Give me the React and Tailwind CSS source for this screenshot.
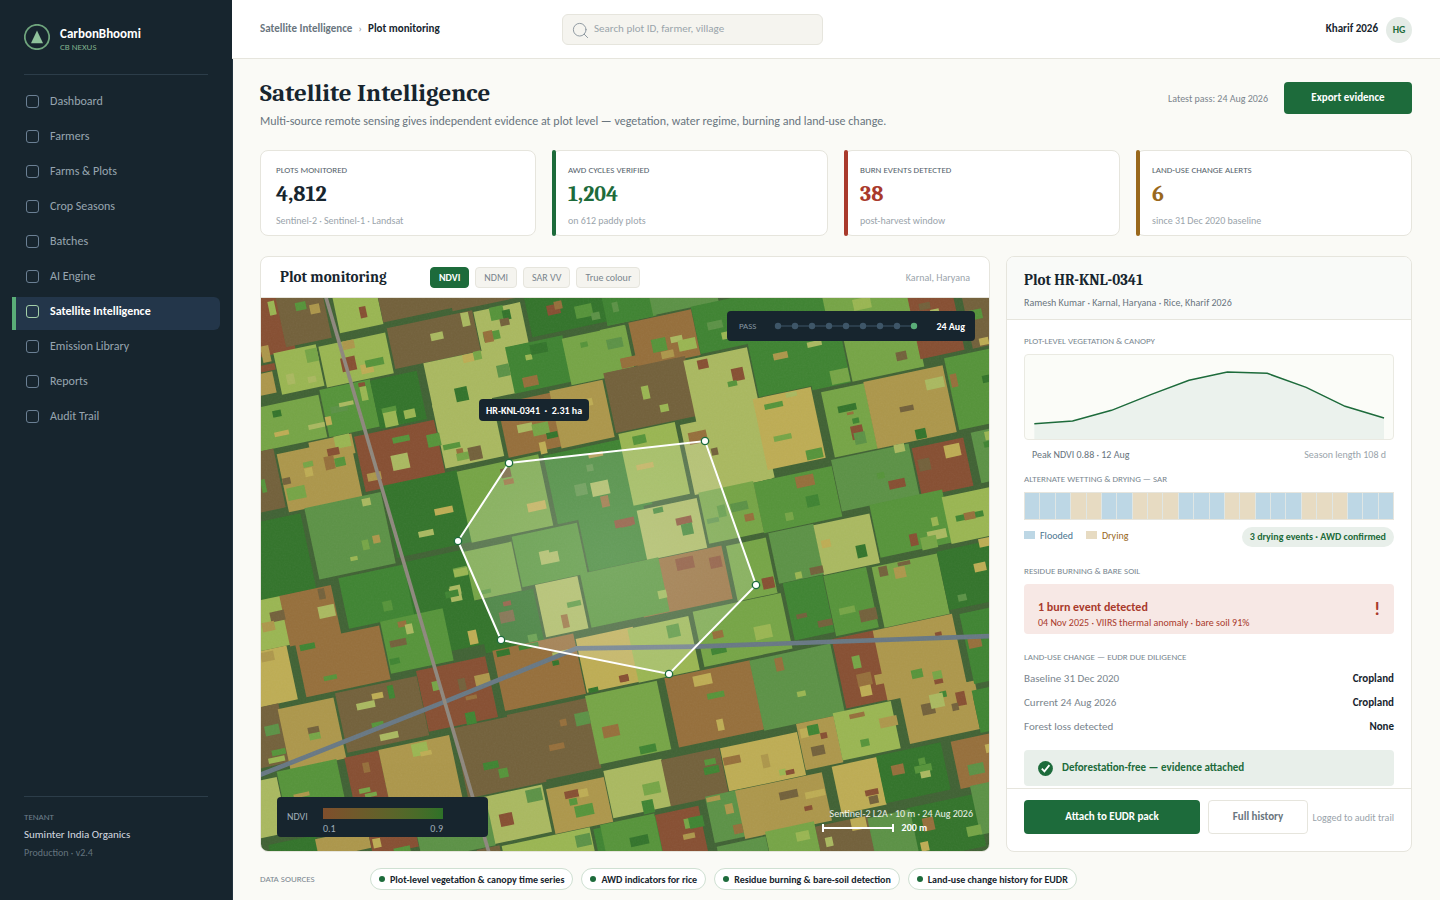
import React from 'react';
import { Search } from 'lucide-react';

const navItems = [
  'Dashboard',
  'Farmers',
  'Farms & Plots',
  'Crop Seasons',
  'Batches',
  'AI Engine',
  'Satellite Intelligence',
  'Emission Library',
  'Reports',
  'Audit Trail',
];

const stats = [
  { label: 'PLOTS MONITORED', value: '4,812', note: 'Sentinel-2 · Sentinel-1 · Landsat', text: 'text-[#17252e]', bar: '' },
  { label: 'AWD CYCLES VERIFIED', value: '1,204', note: 'on 612 paddy plots', text: 'text-[#1d6b3b]', bar: 'bg-[#1d6b3b]' },
  { label: 'BURN EVENTS DETECTED', value: '38', note: 'post-harvest window', text: 'text-[#a93a2c]', bar: 'bg-[#a93a2c]' },
  { label: 'LAND-USE CHANGE ALERTS', value: '6', note: 'since 31 Dec 2020 baseline', text: 'text-[#99681c]', bar: 'bg-[#99681c]' },
];

const layers = ['NDVI', 'NDMI', 'SAR VV', 'True colour'];

const sources = [
  'Plot-level vegetation & canopy time series',
  'AWD indicators for rice',
  'Residue burning & bare-soil detection',
  'Land-use change history for EUDR',
];

const landUse = [
  ['Baseline 31 Dec 2020', 'Cropland'],
  ['Current 24 Aug 2026', 'Cropland'],
  ['Forest loss detected', 'None'],
];

// F = flooded, D = drying
const awd = 'FFFDDFFDDDFFFDDFFFDDDFFF'.split('');

const crops = {
  A: '#33742b',
  B: '#3f8432',
  C: '#56943a',
  D: '#5c9246',
  E: '#76a546',
  F: '#9ab652',
  G: '#aab960',
  H: '#bead54',
  I: '#ad974b',
  J: '#966f3b',
  K: '#73613b',
  L: '#874f32',
};

// Each tile lists rectangles as [x, y, w, h, crop], turned by the field angle round x, y
const FIELD_ANGLE = -12;

const tiles = [
  {
    x: -3,
    y: -24,
    fields: [
      [-60, 20, 130, 190, 'L'], [41, -4, 140, 180, 'K'], [211, -7, 133, 140, 'F'], [347, -10, 235, 110, 'K'],
      [560, -20, 240, 86, 'K'], [380, 115, 262, 125, 'K'], [640, 66, 143, 125, 'G'], [490, 220, 255, 145, 'G'],
      [40, 190, 130, 127, 'F'], [175, 170, 205, 125, 'F'], [-30, 258, 68, 65, 'I'], [0, 170, 25, 50, 'I'],
      [-40, 360, 220, 130, 'E'], [178, 300, 155, 145, 'C'], [330, 272, 143, 148, 'A'], [735, 172, 176, 142, 'B'],
      [1020, 0, 150, 110, 'C'], [785, -10, 235, 155, 'A'], [905, 146, 195, 143, 'E'], [282, 440, 245, 170, 'L'],
      [516, 345, 180, 195, 'G'], [50, 493, 225, 178, 'I'], [145, 458, 132, 60, 'I'], [-50, 495, 92, 180, 'K'],
      [133, 655, 234, 218, 'D'], [-60, 708, 185, 230, 'A'], [366, 588, 230, 220, 'A'], [712, 342, 165, 165, 'J'],
      [868, 303, 163, 176, 'I'], [1042, 248, 150, 180, 'K'], [590, 545, 250, 218, 'E'], [850, 497, 290, 210, 'B'],
      [940, 620, 200, 230, 'B'], [755, 740, 200, 155, 'C'], [425, 818, 196, 290, 'A'], [612, 785, 145, 150, 'E'],
    ],
    patches: [
      [22, 36, 20, 42, 'F'], [104, 40, 32, 24, 'C'], [147, 46, 30, 28, 'I'], [296, 52, 20, 34, 'L'],
      [600, 70, 24, 42, 'G'], [510, 132, 38, 22, 'G'], [686, 54, 42, 40, 'C'], [725, 62, 24, 30, 'A'],
      [718, 88, 28, 22, 'K'], [668, 130, 50, 26, 'C'], [668, 126, 28, 34, 'J'], [858, 48, 40, 30, 'L'],
      [880, 36, 24, 24, 'J'], [942, 50, 52, 38, 'C'], [992, 70, 26, 22, 'D'], [1054, 38, 18, 30, 'D'],
      [134, 180, 36, 40, 'E'], [77, 254, 24, 32, 'G'], [142, 262, 25, 18, 'G'], [245, 155, 36, 26, 'I'],
      [240, 206, 44, 42, 'L'], [300, 226, 38, 28, 'H'], [314, 212, 56, 22, 'C'], [0, 228, 44, 20, 'L'],
      [606, 196, 34, 24, 'H'], [638, 186, 24, 26, 'E'], [708, 228, 38, 36, 'D'], [795, 196, 20, 16, 'F'],
      [808, 166, 52, 30, 'A'], [786, 264, 46, 30, 'J'], [960, 158, 22, 16, 'C'], [1038, 150, 48, 30, 'D'],
      [1080, 206, 60, 30, 'J'], [582, 296, 38, 42, 'A'], [294, 280, 20, 12, 'L'], [298, 292, 20, 42, 'F'],
      [210, 352, 52, 20, 'D'], [236, 340, 44, 12, 'G'], [194, 382, 18, 26, 'H'], [144, 406, 50, 14, 'G'],
      [42, 428, 44, 14, 'H'], [36, 364, 26, 20, 'A'], [364, 356, 44, 18, 'C'], [368, 370, 40, 44, 'F'],
      [430, 362, 34, 26, 'F'], [396, 444, 52, 18, 'C'], [498, 436, 40, 38, 'C'], [391, 498, 52, 46, 'G'],
      [320, 552, 42, 24, 'I'], [548, 466, 52, 16, 'C'], [588, 478, 20, 16, 'J'], [588, 492, 38, 22, 'E'],
      [622, 474, 40, 40, 'K'], [770, 406, 46, 24, 'G'], [814, 404, 50, 36, 'E'], [858, 430, 34, 18, 'A'],
      [836, 458, 20, 36, 'H'], [972, 328, 24, 22, 'H'], [984, 492, 44, 14, 'I'], [220, 440, 48, 38, 'F'],
      [200, 478, 36, 22, 'L'], [190, 502, 30, 40, 'J'], [222, 506, 32, 26, 'C'], [128, 518, 30, 16, 'E'],
      [132, 536, 24, 26, 'H'], [66, 566, 24, 20, 'K'], [78, 596, 56, 38, 'E'], [0, 570, 14, 40, 'C'],
      [304, 628, 26, 22, 'G'], [336, 738, 22, 24, 'I'], [304, 752, 20, 30, 'E'], [270, 802, 22, 12, 'F'],
      [522, 658, 56, 20, 'H'], [474, 726, 46, 18, 'G'], [720, 538, 30, 28, 'K'], [730, 570, 30, 16, 'J'],
      [800, 642, 56, 26, 'H'], [978, 526, 20, 20, 'D'], [942, 586, 36, 34, 'D'], [990, 580, 54, 42, 'G'],
      [1020, 620, 24, 34, 'J'], [1062, 692, 60, 24, 'L'], [836, 786, 56, 40, 'G'], [864, 770, 50, 18, 'C'],
      [578, 836, 42, 28, 'E'], [568, 890, 32, 28, 'G'],
    ],
  },
  {
    x: 1077,
    y: -24,
    fields: [
      [-60, 0, 140, 110, 'B'], [80, -20, 200, 98, 'D'], [212, 50, 420, 145, 'B'], [383, 160, 175, 165, 'B'],
      [540, 125, 118, 180, 'B'], [600, -10, 270, 100, 'E'], [655, 75, 220, 205, 'E'], [859, 7, 135, 205, 'L'],
      [1020, -5, 150, 185, 'K'], [-60, 120, 75, 100, 'E'], [0, 207, 195, 30, 'J'], [25, 98, 192, 140, 'J'],
      [-50, 250, 250, 183, 'K'], [180, 405, 238, 215, 'G'], [190, 212, 195, 400, 'G'], [398, 328, 178, 217, 'H'],
      [603, 307, 132, 200, 'E'], [730, 276, 243, 205, 'I'], [972, 205, 180, 220, 'C'], [-5, 432, 173, 220, 'F'],
      [1052, 428, 120, 155, 'D'], [875, 475, 158, 148, 'L'], [633, 510, 238, 158, 'D'], [400, 578, 240, 155, 'C'],
      [235, 608, 168, 157, 'E'], [50, 662, 184, 153, 'G'], [-70, 675, 112, 160, 'B'], [38, 823, 272, 163, 'J'],
      [445, 730, 138, 155, 'D'], [580, 706, 172, 152, 'G'], [748, 645, 223, 162, 'C'], [965, 622, 160, 143, 'F'],
      [318, 768, 122, 170, 'E'], [488, 880, 122, 175, 'B'], [610, 858, 131, 185, 'C'], [755, 832, 200, 185, 'E'],
      [950, 785, 180, 180, 'A'],
    ],
    patches: [
      [260, 98, 46, 24, 'D'], [303, 128, 20, 22, 'F'], [92, 150, 44, 40, 'C'], [150, 142, 36, 18, 'G'],
      [172, 152, 54, 34, 'F'], [122, 186, 38, 22, 'I'], [230, 212, 32, 28, 'L'], [332, 238, 36, 38, 'L'],
      [322, 276, 28, 16, 'C'], [62, 290, 22, 40, 'F'], [118, 346, 26, 22, 'F'], [458, 192, 44, 20, 'I'],
      [560, 158, 44, 16, 'G'], [628, 244, 56, 42, 'E'], [826, 188, 32, 26, 'K'], [696, 30, 54, 34, 'F'],
      [895, 42, 34, 20, 'K'], [930, 60, 26, 12, 'G'], [1040, 64, 44, 30, 'C'], [1076, 146, 28, 22, 'H'],
      [432, 344, 56, 16, 'C'], [496, 310, 34, 14, 'G'], [460, 440, 54, 16, 'E'], [556, 482, 50, 30, 'C'],
      [652, 350, 56, 20, 'A'], [680, 368, 20, 8, 'J'], [696, 386, 20, 16, 'B'], [690, 410, 36, 42, 'L'],
      [700, 430, 34, 36, 'D'], [838, 352, 42, 16, 'K'], [914, 270, 56, 32, 'G'], [884, 420, 32, 30, 'A'],
      [988, 254, 20, 40, 'J'], [1085, 258, 30, 22, 'A'], [36, 440, 40, 26, 'C'], [48, 526, 52, 16, 'H'],
      [203, 430, 55, 36, 'J'], [272, 476, 20, 22, 'K'], [970, 468, 48, 38, 'H'], [892, 510, 36, 36, 'K'],
      [820, 466, 32, 24, 'G'], [1092, 426, 24, 26, 'F'], [1090, 456, 24, 18, 'B'], [770, 550, 22, 18, 'C'],
      [804, 574, 50, 26, 'L'], [524, 562, 56, 34, 'J'], [556, 620, 38, 34, 'B'], [494, 670, 24, 24, 'E'],
      [290, 648, 24, 36, 'C'], [330, 642, 52, 26, 'D'], [372, 674, 28, 22, 'J'], [260, 688, 36, 14, 'D'],
      [98, 656, 30, 16, 'B'], [166, 686, 48, 22, 'L'], [182, 704, 34, 34, 'B'], [0, 692, 32, 22, 'L'],
      [165, 808, 54, 36, 'L'], [266, 804, 36, 34, 'L'], [602, 752, 28, 24, 'H'], [706, 768, 30, 38, 'A'],
      [932, 684, 20, 26, 'F'], [866, 734, 24, 36, 'L'], [920, 726, 58, 28, 'G'], [900, 744, 48, 38, 'E'],
      [1006, 678, 84, 18, 'B'], [1030, 670, 34, 22, 'J'], [1074, 748, 40, 26, 'H'], [1060, 822, 36, 26, 'H'],
      [832, 818, 38, 12, 'K'], [774, 832, 26, 30, 'K'], [820, 834, 34, 34, 'I'], [568, 834, 40, 22, 'K'],
      [524, 848, 20, 20, 'F'], [424, 866, 36, 34, 'L'],
    ],
  },
  {
    x: -3,
    y: 816,
    fields: [
      [-30, 97, 92, 150, 'F'], [-40, 252, 122, 165, 'H'], [58, 78, 158, 155, 'J'], [105, 220, 258, 165, 'J'],
      [235, 25, 200, 155, 'B'], [360, 155, 192, 160, 'C'], [645, 93, 178, 160, 'A'], [825, 45, 130, 160, 'G'],
      [960, 12, 240, 165, 'C'], [-40, 420, 97, 180, 'K'], [53, 418, 171, 186, 'I'], [225, 370, 250, 182, 'K'],
      [468, 303, 212, 186, 'L'], [697, 242, 248, 185, 'J'], [947, 207, 175, 165, 'H'], [580, 475, 240, 215, 'K'],
      [740, 435, 245, 215, 'K'], [975, 378, 220, 210, 'E'], [-40, 640, 92, 170, 'G'], [50, 605, 183, 145, 'C'],
      [253, 563, 105, 150, 'L'], [355, 540, 217, 205, 'I'], [660, 683, 190, 145, 'G'], [858, 658, 177, 137, 'I'],
      [1030, 603, 178, 145, 'G'], [25, 825, 145, 60, 'A'], [165, 808, 160, 60, 'I'], [325, 790, 140, 70, 'L'],
      [460, 745, 225, 130, 'D'], [650, 840, 70, 30, 'K'], [725, 828, 270, 80, 'F'], [1000, 778, 195, 120, 'B'],
    ],
    patches: [
      [172, 58, 20, 32, 'K'], [172, 112, 50, 36, 'G'], [28, 128, 44, 30, 'K'], [4, 160, 38, 28, 'I'],
      [0, 250, 40, 28, 'I'], [118, 226, 46, 18, 'B'], [190, 320, 40, 14, 'C'], [366, 96, 28, 30, 'C'],
      [388, 214, 50, 20, 'K'], [412, 156, 26, 18, 'J'], [434, 164, 22, 30, 'G'], [388, 268, 30, 18, 'B'],
      [566, 56, 34, 42, 'G'], [554, 66, 40, 20, 'B'], [580, 0, 42, 22, 'F'], [622, 184, 26, 42, 'H'],
      [716, 128, 44, 34, 'K'], [728, 96, 24, 14, 'L'], [662, 62, 30, 12, 'C'], [802, 196, 28, 22, 'C'],
      [902, 136, 20, 40, 'J'], [920, 98, 42, 16, 'C'], [708, 244, 40, 18, 'A'], [775, 228, 60, 14, 'B'],
      [876, 248, 56, 14, 'G'], [876, 274, 20, 14, 'A'], [984, 356, 30, 14, 'A'], [1076, 318, 28, 20, 'L'],
      [1025, 472, 50, 34, 'J'], [942, 432, 44, 38, 'D'], [898, 450, 20, 20, 'J'], [866, 526, 46, 18, 'J'],
      [668, 580, 46, 22, 'B'], [714, 598, 28, 28, 'C'], [614, 430, 30, 36, 'B'], [616, 380, 34, 12, 'J'],
      [642, 318, 46, 32, 'I'], [592, 328, 22, 36, 'K'], [514, 336, 22, 28, 'E'], [380, 348, 18, 40, 'B'],
      [334, 372, 34, 18, 'H'], [288, 402, 56, 20, 'G'], [334, 460, 36, 14, 'C'], [358, 494, 56, 20, 'G'],
      [142, 474, 34, 20, 'K'], [146, 492, 34, 20, 'E'], [12, 470, 44, 30, 'D'], [34, 542, 42, 18, 'C'],
      [24, 566, 50, 16, 'F'], [306, 580, 20, 30, 'J'], [452, 524, 48, 38, 'F'], [480, 546, 34, 14, 'H'],
      [296, 658, 34, 14, 'E'], [314, 672, 36, 12, 'E'], [100, 674, 48, 12, 'I'], [795, 662, 48, 38, 'D'],
      [716, 734, 40, 38, 'L'], [912, 666, 42, 22, 'L'], [954, 660, 28, 24, 'H'], [926, 688, 24, 20, 'C'],
      [942, 710, 56, 34, 'C'], [944, 798, 46, 36, 'D'], [336, 808, 24, 28, 'H'], [400, 836, 50, 18, 'C'],
    ],
  },
  {
    x: 1077,
    y: 816,
    fields: [
      [22, 177, 187, 165, 'F'], [218, 125, 270, 170, 'E'], [133, 325, 262, 212, 'J'], [388, 272, 248, 215, 'D'],
      [635, 208, 130, 212, 'L'], [840, 380, 214, 145, 'I'], [758, 182, 243, 215, 'I'], [1000, 345, 65, 50, 'I'],
      [1018, 132, 130, 215, 'B'], [1055, 362, 100, 130, 'B'], [123, 570, 178, 142, 'K'], [300, 535, 236, 132, 'H'],
      [528, 462, 115, 142, 'I'], [638, 430, 178, 145, 'F'], [255, 680, 112, 142, 'D'], [345, 662, 266, 148, 'I'],
      [635, 590, 138, 145, 'H'], [768, 558, 198, 145, 'A'], [992, 515, 150, 145, 'J'], [105, 735, 133, 140, 'L'],
      [860, 715, 210, 160, 'A'], [1050, 648, 100, 150, 'D'], [585, 770, 160, 120, 'K'], [742, 745, 130, 130, 'D'],
      [435, 785, 150, 100, 'E'], [290, 830, 150, 60, 'D'], [-60, 765, 166, 140, 'C'],
    ],
    patches: [
      [112, 64, 26, 24, 'F'], [138, 168, 38, 38, 'C'], [276, 186, 32, 22, 'J'], [400, 172, 52, 40, 'F'],
      [272, 236, 46, 20, 'B'], [528, 134, 32, 14, 'K'], [656, 116, 48, 20, 'E'], [716, 122, 52, 36, 'K'],
      [592, 154, 44, 20, 'K'], [1012, 76, 26, 20, 'D'], [0, 318, 24, 20, 'L'], [217, 320, 56, 32, 'H'],
      [260, 372, 52, 18, 'C'], [288, 450, 20, 34, 'H'], [462, 266, 24, 40, 'J'], [530, 366, 26, 16, 'F'],
      [694, 260, 24, 38, 'E'], [708, 314, 44, 38, 'J'], [762, 316, 26, 30, 'I'], [718, 350, 34, 32, 'H'],
      [872, 302, 34, 26, 'C'], [936, 306, 28, 24, 'E'], [942, 330, 26, 14, 'L'], [958, 366, 20, 18, 'B'],
      [1005, 368, 28, 42, 'L'], [902, 404, 40, 34, 'K'], [926, 376, 42, 42, 'G'], [994, 402, 20, 22, 'K'],
      [944, 188, 20, 12, 'L'], [1042, 208, 40, 30, 'J'], [57, 530, 50, 24, 'B'], [66, 644, 52, 34, 'E'],
      [64, 694, 34, 40, 'B'], [28, 804, 56, 28, 'A'], [252, 570, 34, 18, 'C'], [250, 594, 46, 22, 'B'],
      [308, 564, 52, 24, 'J'], [422, 556, 22, 40, 'I'], [476, 600, 20, 18, 'F'], [496, 602, 26, 14, 'L'],
      [538, 478, 24, 28, 'H'], [560, 468, 34, 30, 'B'], [600, 490, 20, 18, 'L'], [572, 532, 40, 28, 'K'],
      [687, 434, 46, 14, 'J'], [776, 446, 54, 30, 'I'], [720, 510, 26, 22, 'C'], [812, 588, 38, 30, 'J'],
      [882, 590, 52, 22, 'C'], [894, 566, 20, 20, 'C'], [900, 606, 30, 20, 'G'], [1042, 586, 48, 32, 'D'],
      [734, 662, 40, 18, 'L'], [745, 680, 28, 24, 'K'], [258, 684, 42, 14, 'I'], [313, 704, 24, 30, 'I'],
      [338, 766, 28, 28, 'J'], [476, 668, 56, 24, 'K'], [554, 668, 60, 20, 'H'], [552, 710, 24, 14, 'L'],
      [190, 748, 30, 30, 'E'], [204, 744, 44, 34, 'B'], [188, 794, 36, 16, 'I'], [526, 788, 40, 28, 'F'],
      [690, 748, 46, 36, 'H'], [614, 804, 22, 28, 'G'], [905, 746, 34, 40, 'J'], [900, 818, 24, 28, 'H'],
      [1038, 772, 44, 30, 'E'], [1094, 524, 20, 26, 'H'],
    ],
  },
];

const boundary = [
  [744, 495],
  [1332, 429],
  [1485, 861],
  [1224, 1128],
  [720, 1026],
  [591, 729],
];

function Patchwork({ layer }) {
  return tiles.map((tile, t) => (
    <g key={t} transform={`translate(${tile.x} ${tile.y})`}>
      {tile[layer].map(([x, y, w, h, crop], i) => (
        <rect
          key={i}
          width={w}
          height={h}
          fill={crops[crop]}
          transform={`translate(${x} ${y}) rotate(${FIELD_ANGLE})`}
        />
      ))}
    </g>
  ));
}

function FieldMap() {
  const points = boundary.map((p) => p.join(',')).join(' ');

  return (
    <svg
      viewBox="0 0 2184 1659"
      preserveAspectRatio="xMidYMid slice"
      className="absolute inset-0 h-full w-full"
      role="img"
      aria-label="NDVI map of plot HR-KNL-0341"
    >
      <defs>
        <filter id="grain" x="0" y="0" width="100%" height="100%">
          <feTurbulence type="fractalNoise" baseFrequency="0.2" numOctaves="2" seed="4" />
          <feColorMatrix type="saturate" values="0" />
        </filter>
        <radialGradient id="haze">
          <stop offset="0" stopColor="#ffffff" stopOpacity="0.2" />
          <stop offset="1" stopColor="#ffffff" stopOpacity="0.15" />
        </radialGradient>
      </defs>
      <rect width="2184" height="1659" fill="#406234" />
      <Patchwork layer="fields" />
      <Patchwork layer="patches" />
      <polyline
        points="-3,1431 552,1211 947,1051 1300,1046 2190,1014"
        fill="none"
        stroke="#687884"
        strokeWidth="14"
      />
      <line x1="193" y1="-8" x2="684" y2="1664" stroke="#8f887e" strokeWidth="11" />
      <rect width="2184" height="1659" filter="url(#grain)" opacity="0.06" />
      <polygon points={points} fill="url(#haze)" stroke="#ffffff" strokeWidth="6" />
      {boundary.map(([x, y]) => (
        <circle key={x} cx={x} cy={y} r="11" fill="#ffffff" stroke="#1d6b3b" strokeWidth="4" />
      ))}
    </svg>
  );
}

function Sidebar() {
  return (
    <aside className="flex w-[233px] shrink-0 flex-col border-r border-[#22333f] bg-[#17252e] pb-[39px]">
      <div className="mx-6 flex h-[75px] items-center gap-2.5 border-b border-[#2c3d49]">
        <svg viewBox="0 0 26 26" className="h-[26px] w-[26px]" aria-hidden="true">
          <circle cx="13" cy="13" r="12.2" fill="none" stroke="#6fa57d" strokeWidth="1.8" />
          <path d="M13 6.5 19 19.3H7z" fill="#8fc29b" />
        </svg>
        <div className="pt-2">
          <div className="text-[13px] leading-3 font-bold text-white">CarbonBhoomi</div>
          <div className="text-[9px] leading-[14px] text-[#7fae8b]">CB NEXUS</div>
        </div>
      </div>
      <nav className="mt-3 flex flex-col gap-0.5 px-3 text-[12px]">
        {navItems.map((item) => {
          const active = item === 'Satellite Intelligence';
          return (
            <a
              key={item}
              href="#"
              className={
                active
                  ? 'flex h-[33px] items-center gap-[11px] rounded-r-md border-l-4 border-[#5aad78] bg-[#23364a] pb-[5px] pl-2.5 font-bold text-white'
                  : 'flex h-[33px] items-center gap-[11px] border-l-4 border-transparent pb-[5px] pl-2.5 text-[#97a5b0]'
              }
            >
              <span
                className={
                  active
                    ? 'h-[13px] w-[13px] rounded-[3px] border border-[#a3cfa9]'
                    : 'h-[13px] w-[13px] rounded-[3px] border border-[#6b8094]'
                }
              />
              {item}
            </a>
          );
        })}
      </nav>
      <div className="mx-6 mt-auto border-t border-[#2c3d49] pt-3.5">
        <div className="text-[9px] leading-3 text-[#6f7f8c]">TENANT</div>
        <div className="mt-1 text-[11px] leading-4 text-[#d5dbe0]">Suminter India Organics</div>
        <div className="mt-0.5 text-[10px] leading-4 text-[#64747f]">Production · v2.4</div>
      </div>
    </aside>
  );
}

function Header() {
  return (
    <header className="-ml-px flex h-[59px] items-center border-b border-[#e6e5dd] bg-white pr-7 pl-7 text-[11px]">
      <div className="flex w-[302px] shrink-0 items-center pt-px font-bold">
        <a href="#" className="text-[#69757e]">Satellite Intelligence</a>
        <span className="mx-1.5 font-normal text-[#9aa4ab]">›</span>
        <span className="text-[#17252e]">Plot monitoring</span>
      </div>
      <label className="flex h-[31px] w-[261px] items-center gap-1 rounded-md border border-[#e6e5dd] bg-[#f5f4ef] px-2">
        <Search className="mt-0.5 h-[19px] w-[19px] shrink-0 text-[#8b969e]" strokeWidth={1.2} />
        <input
          type="text"
          aria-label="Search"
          placeholder="Search plot ID, farmer, village"
          className="w-full bg-transparent outline-none placeholder:text-[#9aa4ab]"
        />
      </label>
      <div className="ml-auto flex items-center gap-2 pt-px">
        <span className="font-bold text-[#17252e]">Kharif 2026</span>
        <span className="flex h-[26px] w-[26px] items-center justify-center rounded-full bg-[#e4ebe6] text-[10px] font-bold text-[#1d6b3b]">
          HG
        </span>
      </div>
    </header>
  );
}

function MapPanel() {
  const [layer, setLayer] = React.useState('NDVI');

  return (
    <section className="flex flex-col overflow-hidden rounded-lg border border-[#e6e5dd] bg-white">
      <div className="flex h-[41px] shrink-0 items-center border-b border-[#e6e5dd] px-[19px]">
        <h2 className="w-[150px] font-[Caladea,'Noto_Serif',serif] text-[15px] font-bold">Plot monitoring</h2>
        <div className="flex gap-1.5">
          {layers.map((name) => (
            <button
              key={name}
              type="button"
              onClick={() => setLayer(name)}
              className={
                layer === name
                  ? 'h-[21px] rounded border border-[#1d6b3b] bg-[#1d6b3b] px-2 text-[10px] font-bold text-white'
                  : 'h-[21px] rounded border border-[#e6e5dd] bg-[#f5f4ef] px-2 text-[10px] text-[#7a858d]'
              }
            >
              {name}
            </button>
          ))}
        </div>
        <span className="ml-auto text-[10px] text-[#9aa4ab]">Karnal, Haryana</span>
      </div>
      <div className="relative flex-1 overflow-hidden">
        <FieldMap />
        <div className="absolute top-[101px] left-[218px] flex h-[22px] items-center rounded bg-[#17252e] px-[7px] text-[10px] font-bold whitespace-pre text-white">
          {'HR-KNL-0341  ·  2.31 ha'}
        </div>
        <div className="absolute top-[13px] right-3.5 flex h-[30px] w-[248px] items-center justify-between rounded bg-[#17252e] px-2.5 pl-3">
          <span className="text-[9px] text-[#8595a1]">PASS</span>
          <svg viewBox="0 0 144 8" className="h-2 w-36" aria-hidden="true">
            <line x1="4" y1="4" x2="140" y2="4" stroke="#3e5668" />
            {[4, 21, 38, 55, 72, 89, 106, 123, 140].map((x) => (
              <circle key={x} cx={x} cy="4" r="3.2" fill={x === 140 ? '#5aad78' : '#3e5668'} />
            ))}
          </svg>
          <span className="text-[10px] font-bold text-white">24 Aug</span>
        </div>
        <div className="absolute bottom-3.5 left-4 flex h-10 w-[211px] gap-4 rounded bg-[#17252e] px-2.5 text-[10px] text-[#9fadb8]">
          <span className="w-5 leading-10">NDVI</span>
          <div className="w-[120px] pt-[11px]">
            <div className="h-[11px] bg-linear-to-r from-[#7f4e2c] to-[#2e7228]" />
            <div className="flex justify-between leading-5">
              <span>0.1</span>
              <span>0.9</span>
            </div>
          </div>
        </div>
        <div className="absolute right-4 bottom-4 text-[10px] text-white">
          <div className="leading-[14px] text-white/90">Sentinel-2 L2A · 10 m · 24 Aug 2026</div>
          <div className="-ml-2 flex items-center gap-2 leading-[14px] font-bold">
            <svg viewBox="0 0 72 10" className="h-2.5 w-[72px]" aria-hidden="true">
              <path d="M1 1v8M71 1v8M1 5h70" stroke="#ffffff" strokeWidth="2" fill="none" />
            </svg>
            200 m
          </div>
        </div>
      </div>
    </section>
  );
}

function SectionLabel({ children }) {
  return <h3 className="text-[9px] leading-3 text-[#7a8790]">{children}</h3>;
}

function CanopyChart() {
  const line = '31,209 146,201 263,169 383,121 496,79 611,54 731,58 848,100 965,157 1082,192';
  return (
    <div className="mt-[7px] h-[86px] overflow-hidden rounded border border-[#eaeae2] bg-[#fbfcf8]">
      <svg viewBox="3 3 1106 252" preserveAspectRatio="none" className="h-full w-full" role="img" aria-label="NDVI over the season">
        <polygon points={`31,256 ${line} 1082,256`} fill="#ebf2ed" />
        <polyline points={line} fill="none" stroke="#1d6b3b" strokeWidth="4.5" />
      </svg>
    </div>
  );
}

function PlotPanel() {
  return (
    <section className="flex flex-col overflow-hidden rounded-lg border border-[#e6e5dd] bg-white">
      <div className="h-[63px] shrink-0 border-b border-[#e6e5dd] bg-[#f9faf8] px-[17px] pt-[11px]">
        <h2 className="font-[Caladea,'Noto_Serif',serif] text-[15px] leading-6 font-bold">Plot HR-KNL-0341</h2>
        <p className="mt-[3px] text-[10px] leading-4 text-[#69757e]">Ramesh Kumar · Karnal, Haryana · Rice, Kharif 2026</p>
      </div>

      <div className="flex-1 px-[17px] pt-[15px] pb-0.5">
        <SectionLabel>PLOT-LEVEL VEGETATION &amp; CANOPY</SectionLabel>
        <CanopyChart />
        <div className="mt-[7px] flex justify-between px-2 text-[10px] leading-4">
          <span className="text-[#69757e]">Peak NDVI 0.88 · 12 Aug</span>
          <span className="text-[#9aa4ab]">Season length 108 d</span>
        </div>

        <div className="mt-2.5">
          <SectionLabel>ALTERNATE WETTING &amp; DRYING — SAR</SectionLabel>
        </div>
        <div className="mt-[7px] flex h-7 gap-px border border-[#e6e5dd] bg-[#dfe6e4]">
          {awd.map((state, i) => (
            <span key={i} className={state === 'F' ? 'flex-1 bg-[#bdd7e5]' : 'flex-1 bg-[#e7dbc2]'} />
          ))}
        </div>
        <div className="mt-[7px] flex h-5 items-center text-[10px]">
          <span className="mb-1 flex items-center gap-[5px] text-[#4a7590]">
            <span className="h-2 w-[11px] bg-[#bdd7e5]" />
            Flooded
          </span>
          <span className="mb-1 ml-[13px] flex items-center gap-[5px] text-[#99681c]">
            <span className="h-2 w-[11px] bg-[#e7dbc2]" />
            Drying
          </span>
          <span className="ml-auto rounded-full bg-[#e8efea] px-2 leading-5 font-bold text-[#1d6b3b]">
            3 drying events · AWD confirmed
          </span>
        </div>

        <div className="mt-[18px]">
          <SectionLabel>RESIDUE BURNING &amp; BARE SOIL</SectionLabel>
        </div>
        <div className="mt-[7px] flex h-[50px] items-center justify-between rounded bg-[#f7e8e5] px-3.5 text-[#a93a2c]">
          <div className="pt-[11px]">
            <div className="text-[12px] leading-4 font-bold">1 burn event detected</div>
            <div className="text-[10px] leading-4">04 Nov 2025 · VIIRS thermal anomaly · bare soil 91%</div>
          </div>
          <span className="text-[18px] leading-5 font-bold">!</span>
        </div>

        <div className="mt-[17px]">
          <SectionLabel>LAND-USE CHANGE — EUDR DUE DILIGENCE</SectionLabel>
        </div>
        <dl className="mt-1 text-[11px] leading-6">
          {landUse.map(([term, value]) => (
            <div key={term} className="flex justify-between">
              <dt className="text-[#7a858d]">{term}</dt>
              <dd className="font-bold text-[#17252e]">{value}</dd>
            </div>
          ))}
        </dl>
        <div className="mt-[11px] flex h-9 items-center gap-[9px] rounded bg-[#e8efea] px-3.5 text-[11px] font-bold text-[#1d6b3b]">
          <svg viewBox="0 0 15 15" className="h-[15px] w-[15px]" aria-hidden="true">
            <circle cx="7.5" cy="7.5" r="7.4" fill="#1d6b3b" />
            <path d="m3.8 7.6 2.6 2.7 5-6.2" fill="none" stroke="#ffffff" strokeWidth="1.8" />
          </svg>
          Deforestation-free — evidence attached
        </div>
      </div>

      <div className="flex shrink-0 items-center border-t border-[#e6e5dd] px-[17px] pt-[11px] pb-[17px] text-[11px]">
        <button type="button" className="h-[34px] w-[176px] rounded bg-[#1d6b3b] font-bold text-white">
          Attach to EUDR pack
        </button>
        <button type="button" className="ml-2 h-[34px] w-[100px] rounded border border-[#e6e5dd] bg-white font-bold text-[#69757e]">
          Full history
        </button>
        <span className="ml-auto text-[10px] text-[#9aa4ab]">Logged to audit trail</span>
      </div>
    </section>
  );
}

export default function App() {
  return (
    <div className="flex min-h-screen bg-[#fafaf6] font-[Carlito,Lato,sans-serif] text-[#17252e]">
      <Sidebar />
      <div className="flex min-w-0 flex-1 flex-col">
        <Header />
        <main className="flex flex-1 flex-col pr-7 pb-2.5 pl-[27px]">
          <div className="flex items-start justify-between pt-[18px]">
            <div>
              <h1 className="font-[Caladea,'Noto_Serif',serif] text-[25px] leading-8 font-bold">Satellite Intelligence</h1>
              <p className="mt-0.5 text-[12px] leading-5 text-[#69757e]">
                Multi-source remote sensing gives independent evidence at plot level — vegetation, water regime, burning and land-use change.
              </p>
            </div>
            <div className="mt-[5px] flex items-center gap-4">
              <span className="text-[10px] text-[#7a858d]">Latest pass: 24 Aug 2026</span>
              <button type="button" className="h-8 w-32 rounded bg-[#1d6b3b] text-[11px] font-bold text-white">
                Export evidence
              </button>
            </div>
          </div>

          <div className="mt-[19px] grid grid-cols-4 gap-4">
            {stats.map((stat) => (
              <div key={stat.label} className="relative rounded-lg border border-[#e6e5dd] bg-white px-[15px] pt-[13px] pb-1.5">
                {stat.bar && <span className={`absolute -inset-y-px -left-px w-1 rounded-full ${stat.bar}`} />}
                <div className="text-[9px] leading-3 text-[#55626b]">{stat.label}</div>
                <div className={`mt-0.5 font-[Caladea,'Noto_Serif',serif] text-[22px] leading-8 font-bold ${stat.text}`}>{stat.value}</div>
                <div className="mt-[3px] text-[10px] leading-4 text-[#9aa4ab]">{stat.note}</div>
              </div>
            ))}
          </div>

          <div className="mt-5 grid flex-1 grid-cols-[730fr_406fr] gap-4">
            <MapPanel />
            <PlotPanel />
          </div>

          <div className="mt-4 flex items-center gap-2">
            <span className="w-[102px] text-[9px] text-[#7a8790]">DATA SOURCES</span>
            {sources.map((source) => (
              <span
                key={source}
                className="flex h-[22px] items-center gap-[5px] rounded-full border border-[#cfe0d2] bg-white px-2 text-[10px] font-bold"
              >
                <span className="h-1.5 w-1.5 rounded-full bg-[#1d6b3b]" />
                {source}
              </span>
            ))}
          </div>
        </main>
      </div>
    </div>
  );
}
